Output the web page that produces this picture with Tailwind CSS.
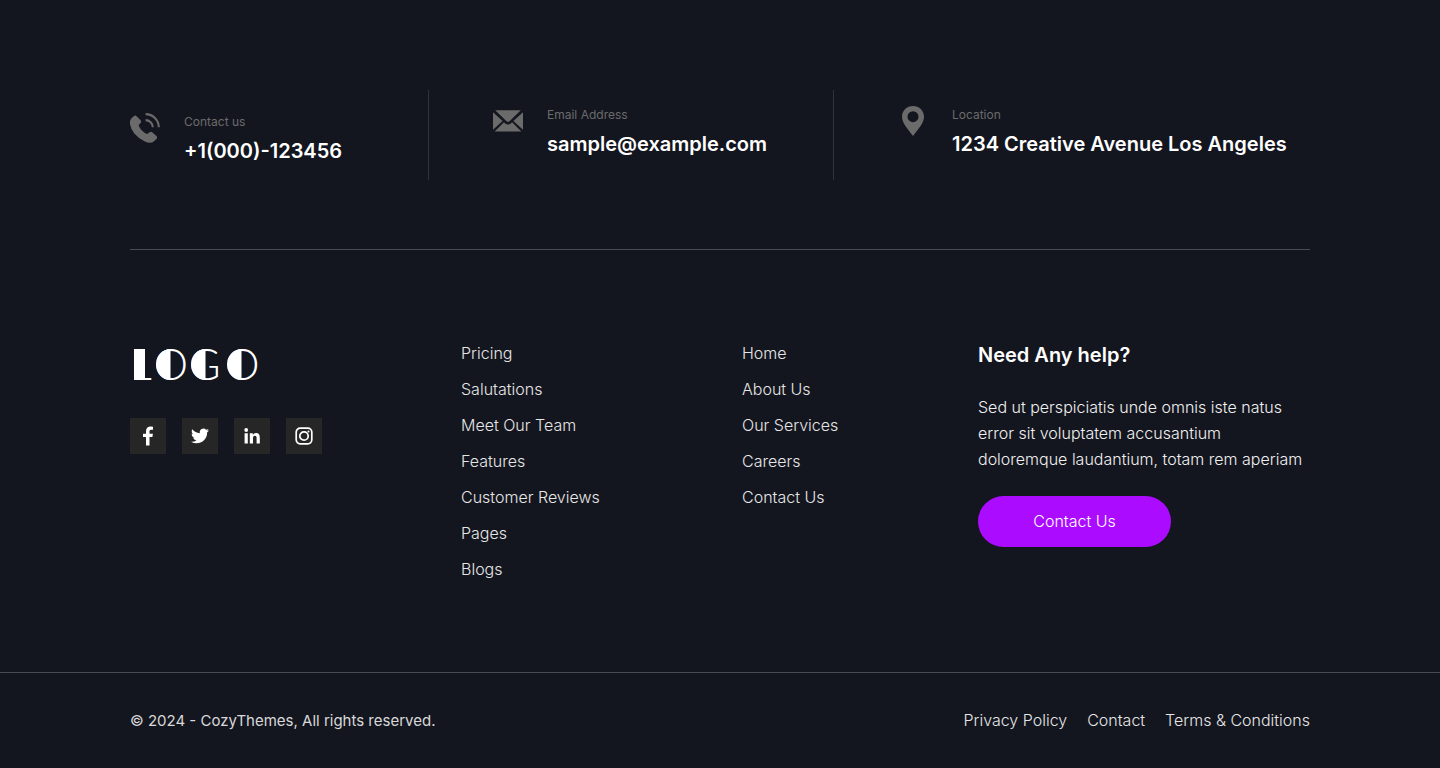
<!DOCTYPE html>
<html lang="en">
<head>
<meta charset="utf-8">
<meta name="viewport" content="width=device-width, initial-scale=1">
<title>CozyThemes</title>
<script src="https://cdn.jsdelivr.net/npm/@tailwindcss/browser@4"></script>
</head>
<body class="bg-[#14161f] font-['Inter',sans-serif] text-base text-[#d9d9d9]">
<footer class="min-h-screen flex flex-col">
  <div class="w-full max-w-[1228px] mx-auto px-6 flex-1">
    <section aria-label="Contact details" class="grid grid-cols-[299fr_405fr_476fr] pt-[90px] pb-[69px] border-b border-[#494b52]">
      <div class="min-h-[90px] flex items-start gap-6 pt-[23px] border-r border-[#31333b]">
        <svg class="size-[30px] shrink-0" viewBox="0 0 30 30" fill="#6b6b6b" aria-hidden="true">
          <path d="M3.7 3.2Q5.2 1.8 6.6 3.2L10.4 7.1Q11.8 8.600 10.4 10.2L8.6 12.1Q9.2 14.700 11.9 17.400T17.3 21L19.6 19.200Q21 18.100 22.5 19.400L26.4 23Q27.8 24.500 26.4 25.900L24 28.200Q20.8 31.400 14.4 28.300Q8.4 25.400 4.3 20.600Q.9 16.600 .1 11.600Q-.6 7.200 1.5 5.200Z"/>
          <path d="M15.6 1.1A13.2 13.2 0 0 1 28.8 14.3" fill="none" stroke="#6b6b6b" stroke-width="2.1"/>
          <path d="M15.6 7.1A7.2 7.2 0 0 1 22.8 14.2" fill="none" stroke="#6b6b6b" stroke-width="2.1"/>
        </svg>
        <div>
          <p class="text-xs leading-[18px] text-[#6b6b6b]">Contact us</p>
          <p class="mt-1.5 text-xl font-semibold text-white">+1(000)-123456</p>
        </div>
      </div>
      <div class="min-h-[90px] flex items-start gap-6 pt-4 pl-16 border-r border-[#31333b]">
        <svg class="size-[30px] shrink-0" viewBox="0 0 30 30" fill="#6b6b6b" aria-hidden="true">
          <path d="M2.2 4.3H27.8L16.5 15.2Q15 16.4 13.5 15.2ZM0 6.2L9.6 15.1 0 23.7ZM30 6.2V23.7L20.4 15.1ZM10.900 16.300L12.200 17.500Q15 19.600 17.800 17.500L19.100 16.300 28.300 25.600H1.700Z"/>
        </svg>
        <div>
          <p class="text-xs leading-[18px] text-[#6b6b6b]">Email Address</p>
          <p class="mt-1.5 text-xl font-semibold text-white">sample@example.com</p>
        </div>
      </div>
      <div class="min-h-[90px] flex items-start gap-6 pt-4 pl-16">
        <svg class="size-[30px] shrink-0" viewBox="0 0 30 30" fill="#6b6b6b" aria-hidden="true">
          <path fill-rule="evenodd" d="M15 0C8.800 0 4 4.700 4 10.800C4 17.500 10 23 15 30C20 23 26 17.500 26 10.800C26 4.700 21.200 0 15 0ZM15 5.200A5.500 5.500 0 1 1 15 16.200A5.500 5.500 0 0 1 15 5.200Z"/>
        </svg>
        <div>
          <p class="text-xs leading-[18px] text-[#6b6b6b]">Location</p>
          <p class="mt-1.5 text-xl font-semibold text-white">1234 Creative Avenue Los Angeles</p>
        </div>
      </div>
    </section>

    <section class="grid grid-cols-[331fr_281fr_236fr_332fr] pt-[85px] pb-[85px]">
      <div>
        <svg class="block w-[136px] h-14" viewBox="0 -8 136 56" fill="#fff" role="img" aria-label="Logo">
          <text y="37" dx="0 4 1 5" font-family="Lato, sans-serif" font-weight="300" font-size="43">LOGO</text>
          <!-- solid left halves -->
          <rect x="4" y="6" width="11" height="31"/>
          <path d="M40.500 6A14.500 15.500 0 0 0 40.500 37ZM75.500 6A14.500 15.500 0 0 0 75.500 37ZM111.500 6A14.500 15.500 0 0 0 111.500 37Z"/>
        </svg>
        <div class="mt-[27px] flex gap-4">
          <a href="#" aria-label="Facebook" class="size-9 bg-[#262626] flex items-center justify-center">
            <svg class="size-5" viewBox="0 0 20 20" fill="#fff" aria-hidden="true"><path d="M8 19.500V11H5V7.800H8V5.300C8 2.200 9.800.6 12.500.6Q13.900.6 15 .8V3.700H13.300C11.900 3.700 11.500 4.500 11.500 5.500V7.800H14.900L14.400 11H11.500V19.500Z"/></svg>
          </a>
          <a href="#" aria-label="Twitter" class="size-9 bg-[#262626] flex items-center justify-center">
            <svg class="size-[18px]" viewBox="0 0 24 24" fill="#fff" aria-hidden="true"><path d="M23.950 4.570a10 10 0 0 1-2.820.77 4.960 4.960 0 0 0 2.160-2.720c-.95.550-2 .950-3.130 1.180a4.920 4.920 0 0 0-8.380 4.480C7.690 8.090 4.070 6.130 1.640 3.160a4.820 4.820 0 0 0-.670 2.470c0 1.710.87 3.210 2.190 4.100a4.900 4.900 0 0 1-2.230-.610v.060a4.920 4.920 0 0 0 3.950 4.820 5 5 0 0 1-2.210.09 4.940 4.940 0 0 0 4.600 3.420A9.870 9.870 0 0 1 0 19.540a13.990 13.990 0 0 0 7.550 2.210c9.050 0 14-7.500 14-13.980 0-.210 0-.420-.020-.630a9.940 9.940 0 0 0 2.420-2.570z"/></svg>
          </a>
          <a href="#" aria-label="LinkedIn" class="size-9 bg-[#262626] flex items-center justify-center">
            <svg class="size-4" viewBox="0 0 16 16" fill="#fff" aria-hidden="true"><circle cx="2.200" cy="2" r="1.900"/><path d="M.6 5.300H3.800V15.500H.6ZM5.800 5.300H8.800V6.700Q9.800 5 12 5C15.200 5 15.800 7.200 15.800 9.900V15.500H12.600V10.500C12.600 9.100 12.500 7.700 10.900 7.700S9 8.900 9 10.400V15.500H5.800Z"/></svg>
          </a>
          <a href="#" aria-label="Instagram" class="size-9 bg-[#262626] flex items-center justify-center">
            <svg class="size-[18px]" viewBox="0 0 18 18" fill="none" stroke="#fff" stroke-width="1.700" aria-hidden="true"><rect x="1.200" y="1.200" width="15.600" height="15.600" rx="4"/><circle cx="9" cy="9" r="4.200"/><circle cx="13.500" cy="4.500" r="1" fill="#fff" stroke="none"/></svg>
          </a>
        </div>
      </div>
      <nav aria-label="Product">
        <ul class="font-light leading-9 text-[#e6e6e6]">
          <li><a href="#">Pricing</a></li>
          <li><a href="#">Salutations</a></li>
          <li><a href="#">Meet Our Team</a></li>
          <li><a href="#">Features</a></li>
          <li><a href="#">Customer Reviews</a></li>
          <li><a href="#">Pages</a></li>
          <li><a href="#">Blogs</a></li>
        </ul>
      </nav>
      <nav aria-label="Company">
        <ul class="font-light leading-9 text-[#e6e6e6]">
          <li><a href="#">Home</a></li>
          <li><a href="#">About Us</a></li>
          <li><a href="#">Our Services</a></li>
          <li><a href="#">Careers</a></li>
          <li><a href="#">Contact Us</a></li>
        </ul>
      </nav>
      <div class="pt-[6px]">
        <h2 class="text-xl font-semibold text-white">Need Any help?</h2>
        <p class="mt-[25px] leading-[26px] font-light text-[#f0f0f0]">Sed ut perspiciatis unde omnis iste natus<br>error sit voluptatem accusantium<br>doloremque laudantium, totam rem aperiam</p>
        <button type="button" class="mt-6 h-[51px] w-[193px] pb-0.5 rounded-full bg-[#ab0cff] font-light text-white">Contact Us</button>
      </div>
    </section>
  </div>

  <div class="border-t border-[#494b52]">
    <div class="w-full max-w-[1228px] mx-auto px-6 pt-[35px] pb-9 flex items-baseline justify-between">
      <p class="text-[15px] leading-6">© 2024 - CozyThemes, All rights reserved.</p>
      <nav aria-label="Legal" class="flex gap-5 font-light text-[#e6e6e6]">
        <a href="#">Privacy Policy</a>
        <a href="#">Contact</a>
        <a href="#">Terms &amp; Conditions</a>
      </nav>
    </div>
  </div>
</footer>
</body>
</html>
